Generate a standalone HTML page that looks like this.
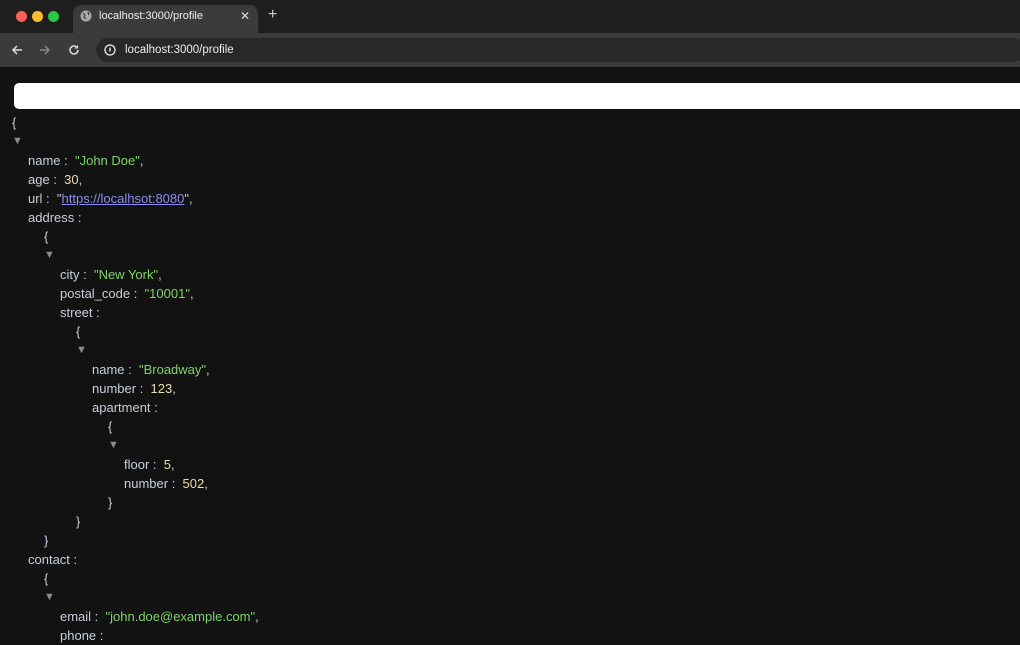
<!DOCTYPE html>
<html><head><meta charset="utf-8"><style>
*{margin:0;padding:0;box-sizing:border-box}
body{width:1020px;height:638px;overflow:hidden;background:#121212;font-family:"Liberation Sans",sans-serif;position:relative}
.tabs{position:absolute;left:0;top:0;width:1020px;height:33px;background:#1e1e1e}
.tab{position:absolute;left:73px;top:5px;width:185px;height:28px;background:#3b3b3b;border-radius:8px 8px 0 0;color:#eee;font-size:11px;line-height:22px;padding-left:26px}
.tool{position:absolute;left:0;top:33px;width:1020px;height:34px;background:#3b3b3b}
.addr{position:absolute;left:96px;top:38px;width:930px;height:24px;background:#282828;border-radius:12px;color:#eee;font-size:11.5px;line-height:24px;padding-left:29px}
.dot{position:absolute;top:11px;width:11px;height:11px;border-radius:50%}
.inp{position:absolute;left:14px;top:83px;width:1020px;height:26px;background:#fff;border-radius:5px}
.c{position:absolute;left:0;top:2px}
.l{position:absolute;font-size:13px;line-height:19px;color:#c9cedb;white-space:pre}
.s{color:#7fd36b}.n{color:#e6dcb0}.a{color:#8a8a92;font-size:11px}
.u{color:#8a8cf2;text-decoration:underline}
</style></head><body>
<div class="tabs">
<div class="dot" style="left:16px;background:#fe5f57"></div>
<div class="dot" style="left:32px;background:#febc2e"></div>
<div class="dot" style="left:48px;background:#28c840"></div>
<div class="tab">localhost:3000/profile
<svg style="position:absolute;left:7px;top:5px" width="12" height="12" viewBox="0 0 12 12"><circle cx="6" cy="6" r="5.5" fill="#aaa"/><path d="M3 3l2 2 -1 2 2 2M8 2l1 3" stroke="#3b3b3b" stroke-width="1.2" fill="none"/></svg>
<span style="position:absolute;left:167px;top:0;color:#ddd;font-size:12px">✕</span></div>
<span style="position:absolute;left:268px;top:6px;color:#ccc;font-size:16px">+</span>
</div>
<div class="tool">
<svg style="position:absolute;left:11px;top:11px" width="12" height="12" viewBox="0 0 12 12"><path d="M11 6H2M6 2L2 6l4 4" stroke="#ddd" stroke-width="1.5" fill="none"/></svg>
<svg style="position:absolute;left:39px;top:11px" width="12" height="12" viewBox="0 0 12 12"><path d="M1 6h9M6 2l4 4-4 4" stroke="#888" stroke-width="1.5" fill="none"/></svg>
<svg style="position:absolute;left:68px;top:11px" width="12" height="12" viewBox="0 0 12 12"><path d="M10 6a4 4 0 1 1-1.2-2.9" stroke="#ddd" stroke-width="1.5" fill="none"/><path d="M10 1v3.5H6.5z" fill="#ddd"/></svg>
</div>
<div class="addr">localhost:3000/profile
<svg style="position:absolute;left:8px;top:6px" width="12" height="12" viewBox="0 0 12 12"><circle cx="6" cy="6" r="5" stroke="#eee" stroke-width="1.3" fill="none"/><path d="M6 3.5v4" stroke="#eee" stroke-width="1.4"/></svg></div>
<div class="inp"></div>
<div class="c">
<div class="l" style="left:12px;top:111px">{</div>
<div class="l a" style="left:12px;top:130px">▼</div>
<div class="l" style="left:28px;top:149px">name :  <span class="s">"John Doe"</span>,</div>
<div class="l" style="left:28px;top:168px">age :  <span class="n">30</span>,</div>
<div class="l" style="left:28px;top:187px">url :  "<span class="u">https://localhsot:8080</span>",</div>
<div class="l" style="left:28px;top:206px">address :</div>
<div class="l" style="left:44px;top:225px">{</div>
<div class="l a" style="left:44px;top:244px">▼</div>
<div class="l" style="left:60px;top:263px">city :  <span class="s">"New York"</span>,</div>
<div class="l" style="left:60px;top:282px">postal_code :  <span class="s">"10001"</span>,</div>
<div class="l" style="left:60px;top:301px">street :</div>
<div class="l" style="left:76px;top:320px">{</div>
<div class="l a" style="left:76px;top:339px">▼</div>
<div class="l" style="left:92px;top:358px">name :  <span class="s">"Broadway"</span>,</div>
<div class="l" style="left:92px;top:377px">number :  <span class="n">123</span>,</div>
<div class="l" style="left:92px;top:396px">apartment :</div>
<div class="l" style="left:108px;top:415px">{</div>
<div class="l a" style="left:108px;top:434px">▼</div>
<div class="l" style="left:124px;top:453px">floor :  <span class="n">5</span>,</div>
<div class="l" style="left:124px;top:472px">number :  <span class="n">502</span>,</div>
<div class="l" style="left:108px;top:491px">}</div>
<div class="l" style="left:76px;top:510px">}</div>
<div class="l" style="left:44px;top:529px">}</div>
<div class="l" style="left:28px;top:548px">contact :</div>
<div class="l" style="left:44px;top:567px">{</div>
<div class="l a" style="left:44px;top:586px">▼</div>
<div class="l" style="left:60px;top:605px">email :  <span class="s">"john.doe@example.com"</span>,</div>
<div class="l" style="left:60px;top:624px">phone :</div>
</div>
</body></html>
